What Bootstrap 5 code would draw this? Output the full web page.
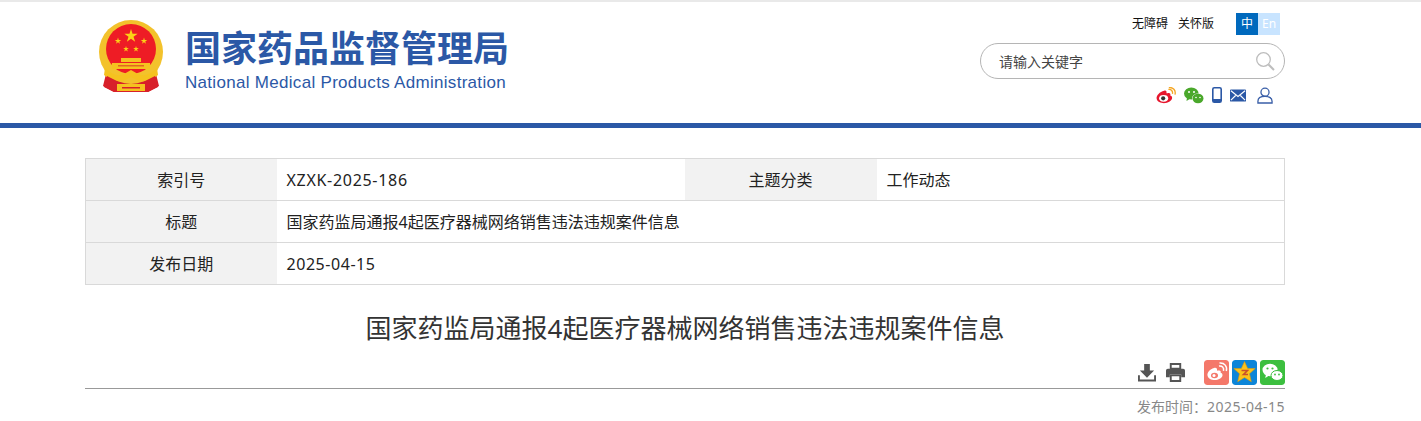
<!DOCTYPE html>
<html lang="zh-CN">
<head>
  <meta charset="UTF-8">
  <title>国家药监局通报4起医疗器械网络销售违法违规案件信息</title>
  <link href="https://cdn.jsdelivr.net/npm/bootstrap@5.3.0/dist/css/bootstrap.min.css" rel="stylesheet">
  <style>
    body { font-family: "Noto Sans", "Noto Sans CJK SC", sans-serif; color: #333; overflow: hidden; }
    .page-top { height: 128px; border-top: 2px solid #e9e9e9; border-bottom: 5px solid #2b58a6; }
    .page-wrap { width: 1200px; margin-left: 85px; }
    .page-top .page-wrap { height: 121px; }
    .logo-box { padding: 18px 0 0 13px; gap: 21px; }
    .logo-cn { font-size: 36px; line-height: 40px; margin-top: 9px; font-weight: 700; color: #2b58a6; white-space: nowrap; }
    .logo-en { font-family: "Liberation Sans", sans-serif; font-size: 17px; line-height: 20px; margin-top: 4px; color: #2b58a6; white-space: nowrap; letter-spacing: .3px; }
    .tools-box { width: 305px; }
    .top-links { height: 22px; margin-top: 11px; padding-right: 5px; font-size: 12px; color: #111; }
    .top-links span.txt { margin-right: 10px; }
    .lang-on, .lang-off { width: 22px; height: 22px; line-height: 22px; text-align: center; }
    .lang-on { background: #0069bd; color: #fff; margin-left: 22px; }
    .lang-off { background: #c8e4ff; color: #fff; }
    .search-box { height: 36px; margin-top: 8px; padding: 0 9px 0 18px; border: 1px solid #b5b5b5; border-radius: 18px; font-size: 14px; color: #444; }
    .icon-row { height: 20px; margin-top: 6px; padding-right: 12px; gap: 8px; }
    .icon-row .user-icon { margin-left: 3px; }
    .info-table { width: 1200px; margin: 30px 0 0; table-layout: fixed; border-color: #d9d9d9; font-size: 16px; color: #222; }
    .info-table td { height: 42px; padding: 0 10px; vertical-align: middle; line-height: 20px; }
    .info-table .lbl { width: 191px; background: #f2f2f2; text-align: center; padding: 0; border-right: 0; }
    .info-table .val { border-left: 0; }
    .info-table .val-half { width: 408px; border-right: 0; }
    .info-table .lbl-mid { width: 192px; border-left: 0; }
    .info-table .code-val { letter-spacing: .7px; }
    .info-table .num-val { letter-spacing: .55px; }
    .art-title { margin: 25px 0 0; font-size: 26px; line-height: 36px; font-weight: 400; text-align: center; color: #333; }
    .share-row { height: 29px; margin-top: 14px; border-bottom: 1px solid #999; }
    .share-row .tool-icon { margin-top: 3px; }
    .share-row .gap-print { margin: 3px 16px 0 10px; }
    .share-btn { width: 25px; height: 25px; border-radius: 3px; margin-left: 3px; display: block; }
    .pub-date { margin-top: 8px; font-size: 14px; line-height: 20px; color: #888; text-align: right; }
    .pub-date .num-val { letter-spacing: .5px; }
  </style>
</head>
<body>
  <!-- header -->
  <div class="page-top">
    <div class="page-wrap d-flex justify-content-between">
      <div class="logo-box d-flex">
        <svg width="66" height="72" viewBox="0 0 66 72">
          <defs><polygon id="star5" points="0,-1 .22,-.31 .95,-.31 .36,.12 .59,.81 0,.38 -.59,.81 -.36,.12 -.95,-.31 -.22,-.31" fill="#fbd116"/></defs>
          <path d="M9 50 L5 66 L16 72 L50 72 L61 66 L57 50Z" fill="#d8202a"/>
          <circle cx="33" cy="32" r="32" fill="#f3c22c"/>
          <circle cx="33" cy="29" r="25" fill="#ee1c25"/>
          <use href="#star5" transform="translate(33 16) scale(7)"/>
          <use href="#star5" transform="translate(20 21) scale(3.400)"/>
          <use href="#star5" transform="translate(46 21) scale(3.400)"/>
          <use href="#star5" transform="translate(28 29) scale(3)"/>
          <use href="#star5" transform="translate(38 29) scale(3)"/>
          <path d="M23 38h20v4H23zM14 43h38v6H14z" fill="#f5c21f"/>
          <path d="M20 45h26v1.500H20z" fill="#e2661f"/>
          <path d="M7 48c7 6 12 9 19 6l7-4 7 4c7 3 12 0 19-6l1 7c-7 6-14 8-21 5l-6-3-6 3c-7 3-14 1-21-5z" fill="#f5c21f"/>
          <path d="M9 56l-3 11 10 5 5-10zM57 56l3 11-10 5-5-10z" fill="#d8202a"/>
          <path d="M19 64h28v7H19z" fill="#f5c21f"/>
          <path d="M24 67h18v1.500H24z" fill="#d8202a"/>
        </svg>
        <div>
          <div class="logo-cn">国家药品监督管理局</div>
          <div class="logo-en">National Medical Products Administration</div>
        </div>
      </div>
      <div class="tools-box">
        <div class="top-links d-flex justify-content-end align-items-center">
          <span class="txt">无障碍</span><span>关怀版</span>
          <span class="lang-on">中</span><span class="lang-off">En</span>
        </div>
        <div class="search-box d-flex justify-content-between align-items-center">
          <span>请输入关键字</span>
          <svg width="20" height="20" viewBox="0 0 20 20" fill="none" stroke="#bdbdbd"><circle cx="8.500" cy="8.500" r="6.800" stroke-width="1.300"/><path d="M13.500 13.500l5.500 5.500" stroke-width="2"/></svg>
        </div>
        <div class="icon-row d-flex justify-content-end align-items-center">
          <svg width="20" height="17" viewBox="0 0 21 18"><path d="M8.500 4C4 5 0 9 .6 12.500 1.200 16 6 17.500 10 17c4-.5 7-3 7-5.500 0-1.800-1.500-2.300-2-2.500.7-2-.3-3.200-3-2.500-.6.200-1 .3-1 0 .4-2.200-.5-3.100-2.500-2.500z" fill="#e6162d"/><ellipse cx="8" cy="12" rx="4.800" ry="3.600" fill="#fff"/><circle cx="7.500" cy="12" r="2.200" fill="#333"/><path d="M13 2.500c3-.5 5 2 4.300 4.800M13.500 .6c4.500-.6 7.700 3 6.500 7.400" fill="none" stroke="#f5a623" stroke-width="1.400"/></svg>
          <svg width="20" height="17" viewBox="0 0 20 17"><ellipse cx="7.300" cy="6.500" rx="7.300" ry="6" fill="#4aa82b"/><path d="M3 10l-.5 4 4-2.500z" fill="#4aa82b"/><ellipse cx="14" cy="11.500" rx="6" ry="5" fill="#fff"/><ellipse cx="14" cy="11.500" rx="5.500" ry="4.800" fill="#4aa82b"/><circle cx="5" cy="5" r="1" fill="#fff"/><circle cx="10" cy="5" r="1" fill="#fff"/><circle cx="12" cy="10.500" r=".8" fill="#fff"/><circle cx="16" cy="10.500" r=".8" fill="#fff"/></svg>
          <svg width="10" height="16" viewBox="0 0 10 16"><rect x=".8" y=".8" width="8.400" height="14.400" rx="1.500" fill="#fff" stroke="#2b58a6" stroke-width="1.600"/><rect x="1" y="12" width="8" height="3" fill="#2b58a6"/></svg>
          <svg width="16" height="13" viewBox="0 0 17 13"><rect width="17" height="13" rx="1" fill="#2b58a6"/><path d="M1 1.500l7.500 6 7.500-6M1 11.500l5-5M16 11.500l-5-5" fill="none" stroke="#fff" stroke-width="1.200"/></svg>
          <svg class="user-icon" width="16" height="17" viewBox="0 0 17 18" fill="none" stroke="#3a5fa8" stroke-width="1.400"><circle cx="8.500" cy="5.500" r="4.300"/><path d="M1 17v-2c0-3 3-5 7.500-5s7.500 2 7.500 5v2z"/></svg>
        </div>
      </div>
    </div>
  </div>

  <div class="page-wrap">
    <table class="table table-bordered info-table">
      <tr>
        <td class="lbl">索引号</td><td class="val val-half code-val">XZXK-2025-186</td>
        <td class="lbl lbl-mid">主题分类</td><td class="val">工作动态</td>
      </tr>
      <tr>
        <td class="lbl">标题</td><td class="val" colspan="3">国家药监局通报4起医疗器械网络销售违法违规案件信息</td>
      </tr>
      <tr>
        <td class="lbl">发布日期</td><td class="val num-val" colspan="3">2025-04-15</td>
      </tr>
    </table>

    <h1 class="art-title">国家药监局通报4起医疗器械网络销售违法违规案件信息</h1>

    <div class="share-row d-flex justify-content-end align-items-start">
      <svg class="tool-icon" width="18" height="19" viewBox="0 0 19 20"><path d="M6.500 1h6v7h4.500l-7.500 7.500L2 8h4.500z" fill="#555"/><path d="M1 13v5.500h17V13" fill="none" stroke="#555" stroke-width="2"/></svg>
      <svg class="gap-print" width="19" height="19" viewBox="0 0 20 20"><path d="M5 1h10v5H5z" fill="none" stroke="#555" stroke-width="2"/><path d="M2 6h16a2 2 0 0 1 2 2v7h-4v-3H4v3H0V8a2 2 0 0 1 2-2z" fill="#555"/><path d="M5 13h10v6H5z" fill="none" stroke="#555" stroke-width="2"/></svg>
      <svg class="share-btn" viewBox="0 0 25 25"><rect width="25" height="25" rx="3" fill="#f4786a"/><path d="M10 8C6 9 3 12.500 3.500 15.500 4 19 8.500 20.500 12 20c3.800-.5 6.500-2.600 6.500-5 0-1.500-1.300-2-1.900-2.200.6-1.800-.2-2.900-2.800-2.200-.5.200-.9.200-.8-.1.300-2-.5-3-3-2.500z" fill="#fff"/><ellipse cx="10.500" cy="15.500" rx="3.500" ry="2.800" fill="#f4786a"/><circle cx="10" cy="15.500" r="1.500" fill="#fff"/><path d="M15 6c3-.5 5.200 1.800 4.500 4.800M15.500 3c5-.5 8 3.500 6.800 8" fill="none" stroke="#fff" stroke-width="1.500"/></svg>
      <svg class="share-btn" viewBox="0 0 25 25"><rect width="25" height="25" rx="3" fill="#0c85d8"/><path d="M12.500 1.500l3.200 7h7.500l-5.700 5.200 1.800 8-6.800-4.200-6.800 4.200 1.800-8L1.800 8.500h7.500z" fill="#fbc21a" stroke="#d99a10" stroke-width=".6"/><path d="M9.500 10.500h6l-4 4h4.500" fill="none" stroke="#c9502a" stroke-width="1.600"/></svg>
      <svg class="share-btn" viewBox="0 0 25 25"><rect width="25" height="25" rx="3" fill="#3cbf3f"/><ellipse cx="10" cy="10" rx="7.500" ry="6.200" fill="#fff"/><path d="M6 14.500l-.8 3.500 4-2.500z" fill="#fff"/><ellipse cx="17" cy="15.500" rx="6" ry="5" fill="#fff" stroke="#3cbf3f"/><circle cx="7.500" cy="8.500" r="1.100" fill="#3cbf3f"/><circle cx="12.500" cy="8.500" r="1.100" fill="#3cbf3f"/><circle cx="15" cy="14.500" r=".9" fill="#3cbf3f"/><circle cx="19" cy="14.500" r=".9" fill="#3cbf3f"/></svg>
    </div>

    <div class="pub-date">发布时间：<span class="num-val">2025-04-15</span></div>
  </div>

  <script src="https://cdn.jsdelivr.net/npm/bootstrap@5.3.0/dist/js/bootstrap.bundle.min.js"></script>
</body>
</html>
